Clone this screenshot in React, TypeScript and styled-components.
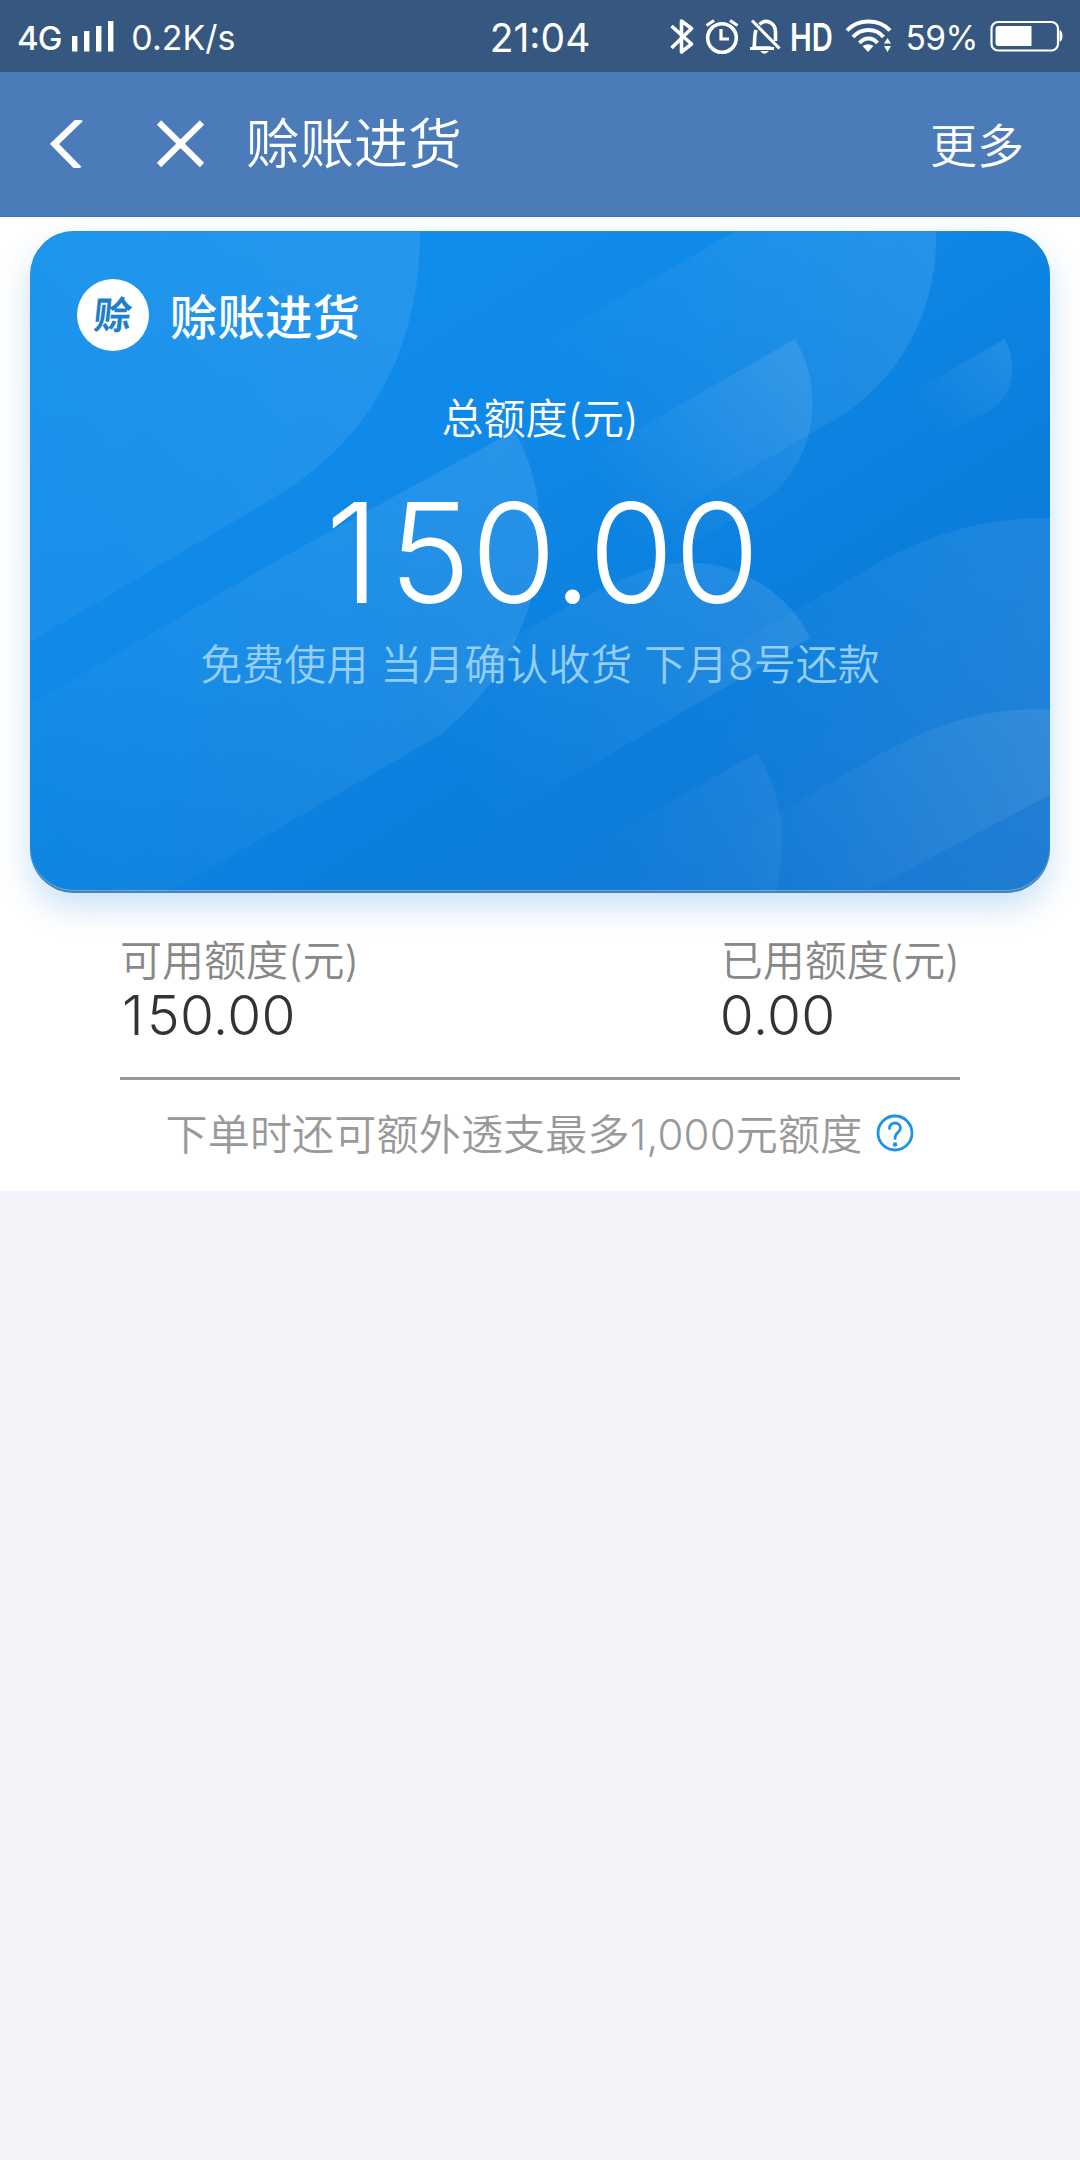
import React from "react";
import styled, { createGlobalStyle } from "styled-components";

const GlobalStyle = createGlobalStyle`
  * { box-sizing: border-box; }
  html, body { margin: 0; padding: 0; background: #f3f3f9; }
  svg { display: block; flex: none; }
`;

const Page = styled.div`
  width: 1080px;
  min-height: 2160px;
  display: flex;
  flex-direction: column;
  background: #f3f3f9;
  font-family: Inter, "Noto Sans CJK SC DemiLight", "Noto Sans CJK SC", sans-serif;
  font-weight: 350;
  white-space: nowrap;
`;

const StatusBar = styled.div`
  height: 72px;
  display: grid;
  grid-template-columns: 1fr auto 1fr;
  align-items: center;
  padding: 4px 17px 0;
  background: #36577f;
  color: #fff;
`;

const StatusGroup = styled.div<{ $end?: boolean }>`
  display: flex;
  align-items: center;
  justify-content: ${(p) => (p.$end ? "flex-end" : "flex-start")};
`;

const StatusText = styled.span<{ $size: number; $weight?: number; $gap?: number; $track?: number }>`
  font-size: ${(p) => p.$size}px;
  font-weight: ${(p) => p.$weight ?? 400};
  line-height: 44px;
  letter-spacing: ${(p) => p.$track ?? 0}px;
  margin-left: ${(p) => p.$gap ?? 0}px;
`;

const HdMark = styled.span`
  width: 43px;
  margin: -3px 0 0 7px;
  font-size: 38px;
  font-weight: 600;
  line-height: 44px;
  transform: scaleX(0.77);
  transform-origin: left center;
`;

const StatusIcon = styled.svg<{ $gap: number; $lift?: number }>`
  margin-left: ${(p) => p.$gap}px;
  margin-top: ${(p) => -(p.$lift ?? 2)}px;
  fill: none;
  stroke: #fff;
  stroke-width: 3.6;
`;

const SignalIcon = styled(StatusIcon)`
  fill: #fff;
  stroke: none;
`;

const NavBar = styled.header`
  height: 145px;
  display: flex;
  align-items: center;
  padding: 0 56px 0 50px;
  background: #4c7bb9;
  border-bottom: 1px solid #4673ae;
  color: #fff;
`;

const NavIcon = styled.svg<{ $gap?: number }>`
  margin-left: ${(p) => p.$gap ?? 0}px;
  fill: none;
  stroke: #fff;
`;

const NavTitle = styled.h1`
  margin: 0 auto 0 40px;
  padding-top: 2px;
  font-size: 54px;
  font-weight: inherit;
  line-height: 80px;
`;

const NavAction = styled.span`
  font-size: 47px;
  line-height: 80px;
  padding-top: 4px;
`;

const Panel = styled.main`
  height: 974px;
  padding: 14px 30px 0;
  background: #fff;
`;

const Card = styled.section`
  position: relative;
  height: 662px;
  border-radius: 44px;
  background: linear-gradient(148deg, #108fec 0%, #108ae8 35%, #0b7edc 66%, #1877d0 100%);
  box-shadow: 0 14px 32px rgba(30, 130, 215, 0.24);
  overflow: hidden;
  color: #fff;
`;

const CardArt = styled.svg`
  position: absolute;
  inset: 0;
`;

const CardEdge = styled.div`
  position: absolute;
  inset: 0;
  border-radius: 44px;
  box-shadow: inset 0 -2px 0 #4f81ab, inset 0 -3px 0 rgba(140, 195, 240, 0.6), inset 0 1px 0 rgba(60, 130, 190, 0.6);
`;

const CardBody = styled.div`
  position: relative;
  display: flex;
  flex-direction: column;
  align-items: center;
  padding-top: 48px;
`;

const Brand = styled.div`
  align-self: flex-start;
  display: flex;
  align-items: center;
  margin-left: 47px;
  height: 72px;
  font-family: "Noto Sans CJK SC", sans-serif;
`;

const BrandSeal = styled.div`
  width: 72px;
  height: 72px;
  border-radius: 50%;
  display: flex;
  align-items: center;
  justify-content: center;
  background: #fff;
  color: #1f7fca;
  font-size: 38px;
  font-weight: 700;
  line-height: 68px;

  span {
    transform: skewX(-6deg) translateY(-2px);
  }
`;

const BrandName = styled.span`
  margin: -4px 0 0 21px;
  padding-top: 3px;
  font-size: 47.5px;
  font-weight: 500;
  line-height: 69px;
`;

const LimitLabel = styled.div`
  margin-top: 38px;
  font-size: 42px;
  line-height: 60px;
`;

const LimitAmount = styled.div`
  margin-top: 45px;
  padding-left: 5px;
  height: 119px;
  font-size: 138.500px;
  line-height: 118px;

  &::first-letter {
    margin-right: 9px;
  }
`;

const LimitNote = styled.div`
  margin-top: 22px;
  font-size: 42px;
  line-height: 60px;
  color: #94cef8;
`;

const Split = styled.div`
  display: flex;
  justify-content: space-between;
  margin: 38px 90px 0;
  padding-bottom: 36px;
  border-bottom: 3px solid #999;
`;

const Stat = styled.div`
  display: flex;
  flex-direction: column;
`;

const StatLabel = styled.span`
  font-size: 42px;
  line-height: 60px;
  color: #888;
`;

const StatValue = styled.span<{ $lead?: boolean }>`
  display: block;
  margin: -2px 0 0 ${(p) => (p.$lead ? 2 : -1)}px;
  font-size: 55px;
  line-height: 52px;
  letter-spacing: 0.3px;
  color: #333;

  &::first-letter {
    margin-right: ${(p) => (p.$lead ? 3 : 0)}px;
  }
`;

const Hint = styled.div`
  display: flex;
  align-items: center;
  justify-content: center;
  margin-top: 25px;
  font-size: 42px;
  line-height: 60px;
  letter-spacing: 0.2px;
  color: #999;
`;

const HelpIcon = styled.svg`
  margin: -4px 0 0 14px;
  fill: none;
  stroke: #1c95e8;
  stroke-width: 2.8;
`;

type Petal = { id: string; d: string; from: [number, number]; to: [number, number]; base: number; alpha: number };

const petals: Petal[] = [
  { id: "a", d: "M0 231H420C420 350 370 440 275 497L30 642V231Z", from: [60, 560], to: [420, 290], base: 0.04, alpha: 0.09 },
  { id: "b", d: "M514 431C548 485 548 575 517 637Q495 690 440 735L150 903H30V705L269 565Z", from: [60, 830], to: [535, 520], base: 0.01, alpha: 0.1 },
  { id: "c", d: "M736 231H936C938 310 900 380 836 419L560 578L500 366Z", from: [570, 420], to: [930, 260], base: 0, alpha: 0.1 },
  { id: "d", d: "M795 339C826 390 818 470 753 508L600 596L560 474Z", from: [620, 520], to: [805, 370], base: 0, alpha: 0.1 },
  { id: "e", d: "M1005 339C1018 366 1014 396 987 412L900 462V399Z", from: [925, 420], to: [1010, 350], base: 0, alpha: 0.09 },
  { id: "f", d: "M1050 518C980 518 930 535 880 562L560 746L620 893H1050Z", from: [720, 790], to: [1040, 560], base: 0, alpha: 0.07 },
  { id: "g", d: "M810 638C780 575 700 545 640 573Q600 587 540 622L400 702V877L540 795Z", from: [470, 800], to: [790, 610], base: 0, alpha: 0.1 },
  { id: "h", d: "M1050 710C980 706 930 728 880 754L640 893H864L1050 795Z", from: [740, 880], to: [1050, 730], base: 0, alpha: 0.085 },
  { id: "i", d: "M757 753C784 795 788 850 775 893H540V875Z", from: [610, 880], to: [775, 790], base: 0, alpha: 0.055 },
];

function Signal() {
  return (
    <SignalIcon $gap={11} $lift={4} width="42" height="32" viewBox="72 20 42 32">
      <path d="M72 36h5.4v15.400H72zM84 31h5.400v20.400H84zM96 26h5.400v25.400H96zM108 21h5.400v30.400H108z" />
    </SignalIcon>
  );
}

function Bluetooth() {
  return (
    <StatusIcon $gap={0} width="24" height="36" viewBox="670 19 24 36">
      <path d="M671.500 26L691.500 44L681.500 52V21L691.500 28.500L671.500 48" strokeLinejoin="round" />
    </StatusIcon>
  );
}

function Alarm() {
  return (
    <StatusIcon $gap={11} width="34" height="36" viewBox="705 19 34 36">
      <circle cx="722" cy="38" r="14.300" />
      <path d="M721 29V39H729M706.500 25.500L714 20.500M737.500 25.500L730 20.500" strokeWidth="3.200" />
    </StatusIcon>
  );
}

function Muted() {
  return (
    <StatusIcon $gap={10} width="34" height="36" viewBox="749 19 34 36">
      <path d="M756 30C754 36 755 43 754 48H771M759.500 24.500C766 18 775.500 23 775.500 32V41" />
      <path d="M750 48.500H774M752 20.500L779.500 48.500" strokeWidth="3.200" />
      <path d="M760 51h9l-3 2.500h-3z" fill="#fff" stroke="none" />
    </StatusIcon>
  );
}

function Wifi() {
  return (
    <StatusIcon $gap={12} width="47" height="36" viewBox="845 19 47 36">
      <path d="M847 30.500C858 18.500 879 18.500 890 30.500M853 37C861 27.500 876 27.500 883.500 37M859.500 43C864.500 37 872.500 37 877.500 43" strokeWidth="4" />
      <path d="M862.500 46Q868 42.500 873.500 46L868 52ZM884 43.500L887.500 38L891 43.500ZM884 46L887.500 52L891 46Z" fill="#fff" stroke="none" />
    </StatusIcon>
  );
}

function Battery() {
  return (
    <StatusIcon $gap={12} $lift={4} width="73" height="32" viewBox="989.500 20 73 32">
      <rect x="991" y="22" width="66.500" height="28.500" rx="6.500" strokeWidth="2.200" />
      <path d="M998 26H1031V46H998Q995 46 995 43V29Q995 26 998 26ZM1059 30Q1062 31 1062 36Q1062 41 1059 42Z" fill="#fff" stroke="none" />
    </StatusIcon>
  );
}

function CardBackdrop() {
  return (
    <CardArt width="1020" height="662" viewBox="30 231 1020 662">
      <defs>
        {petals.map((p) => (
          <linearGradient key={p.id} id={`petal-${p.id}`} gradientUnits="userSpaceOnUse" x1={p.from[0]} y1={p.from[1]} x2={p.to[0]} y2={p.to[1]}>
            <stop offset="0" stopColor="#fff" stopOpacity={p.base} />
            <stop offset="1" stopColor="#fff" stopOpacity={p.alpha} />
          </linearGradient>
        ))}
      </defs>
      {petals.map((p) => (
        <path key={p.id} d={p.d} fill={`url(#petal-${p.id})`} />
      ))}
    </CardArt>
  );
}

export default function App() {
  return (
    <Page>
      <GlobalStyle />
      <StatusBar>
        <StatusGroup>
          <StatusText $size={33} $weight={500} $track={-1}>4G</StatusText>
          <Signal />
          <StatusText $size={34} $gap={17}>0.2K/s</StatusText>
        </StatusGroup>
        <StatusText $size={39}>21:04</StatusText>
        <StatusGroup $end>
          <Bluetooth />
          <Alarm />
          <Muted />
          <HdMark>HD</HdMark>
          <Wifi />
          <StatusText $size={33.5} $gap={13} $track={-0.5}>59%</StatusText>
          <Battery />
        </StatusGroup>
      </StatusBar>

      <NavBar>
        <NavIcon width="33" height="48" viewBox="50 120 33 48" strokeWidth="6.500">
          <path d="M80.500 119L54.500 144L79 169" />
        </NavIcon>
        <NavIcon $gap={73} width="50" height="50" viewBox="156 119 50 50" strokeWidth="6">
          <path d="M159 122.500L202 165M202 122.500L159 165" />
        </NavIcon>
        <NavTitle>赊账进货</NavTitle>
        <NavAction>更多</NavAction>
      </NavBar>

      <Panel>
        <Card>
          <CardBackdrop />
          <CardEdge />
          <CardBody>
            <Brand>
              <BrandSeal>
                <span>赊</span>
              </BrandSeal>
              <BrandName>赊账进货</BrandName>
            </Brand>
            <LimitLabel>总额度(元)</LimitLabel>
            <LimitAmount>150.00</LimitAmount>
            <LimitNote>免费使用 当月确认收货 下月8号还款</LimitNote>
          </CardBody>
        </Card>

        <Split>
          <Stat>
            <StatLabel>可用额度(元)</StatLabel>
            <StatValue $lead>150.00</StatValue>
          </Stat>
          <Stat>
            <StatLabel>已用额度(元)</StatLabel>
            <StatValue>0.00</StatValue>
          </Stat>
        </Split>

        <Hint>
          下单时还可额外透支最多1,000元额度
          <HelpIcon width="38" height="38" viewBox="0 0 38 38">
            <circle cx="19" cy="19" r="17" />
            <path d="M13.500 14.500C13.500 7 24.500 7.500 24.500 14C24.500 18.500 19 18 19 24.500" strokeLinecap="round" />
            <circle cx="19" cy="30.500" r="2.300" fill="#1c95e8" stroke="none" />
          </HelpIcon>
        </Hint>
      </Panel>
    </Page>
  );
}
